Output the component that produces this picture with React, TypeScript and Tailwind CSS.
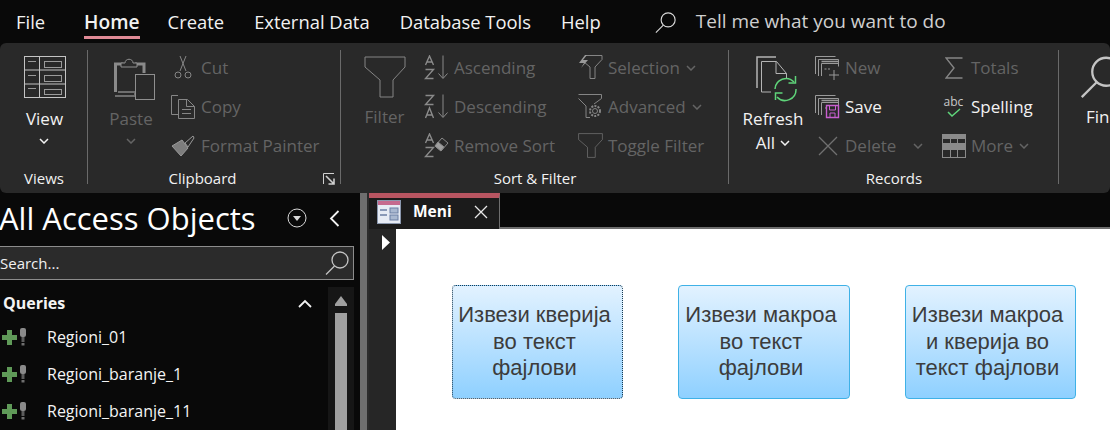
import React from 'react';

const UI_FONT = "font-['Open_Sans','Noto_Sans',sans-serif]";
const ON = 'text-[#f2f2f2]';
const OFF = 'text-[#646464]';

const Chevron = ({ className = '' }: { className?: string }) => (
  <svg width="10" height="6" viewBox="0 0 10 6" className={className} fill="none" stroke="currentColor" strokeWidth="1.5">
    <path d="M1 1l4 4 4-4" />
  </svg>
);

const ViewIcon = () => (
  <svg width="42" height="42" viewBox="0 0 42 42" fill="none" stroke="#c4c4c4">
    <rect x="0.5" y="0.5" width="41" height="41" strokeWidth="1" />
    <path d="M15.5 0v42M0 14h42M0 28h42" strokeWidth="1" />
    <path d="M4 5.5h8M4 19.5h8M4 32.5h8" stroke="#9a9a9a" />
    <rect x="20.5" y="5.5" width="17" height="6" stroke="#9a9a9a" />
    <rect x="20.5" y="19.5" width="17" height="6" stroke="#9a9a9a" />
    <rect x="20.5" y="33.5" width="17" height="5" stroke="#9a9a9a" />
  </svg>
);

const PasteIcon = () => (
  <svg width="42" height="46" viewBox="0 0 42 46" fill="none">
    <path d="M1.5 36V8h8M21 8h9v9" stroke="#8a8a8a" strokeWidth="3" />
    <path d="M1 40h20v-4H4" stroke="#6e6e6e" strokeWidth="2" />
    <path d="M7 11V7h4c0-5 8-5 8 0h4v4z" stroke="#8f8f8f" strokeWidth="1" fill="#2a2a2a" />
    <rect x="21.5" y="18.5" width="19" height="25" stroke="#8f8f8f" />
  </svg>
);

const CutIcon = () => (
  <svg width="20" height="24" viewBox="0 0 20 24" fill="none" stroke="#868686" strokeWidth="1">
    <path d="M7 0l6 15M13 0L7 15" />
    <circle cx="5" cy="19" r="3" />
    <circle cx="15" cy="19" r="3" />
  </svg>
);

const CopyIcon = () => (
  <svg width="24" height="24" viewBox="0 0 24 24" fill="none" stroke="#868686">
    <path d="M7 .5H.5v19H7" />
    <path d="M7.5 4.5h9l7 7v12h-16z" fill="#2a2a2a" />
    <path d="M15.5 4.5v7h8M11 14.5h9M11 18.5h9" />
  </svg>
);

const PainterIcon = () => (
  <svg width="24" height="22" viewBox="0 0 24 22" fill="none">
    <path d="M1 11l10-6 6 8-7 8z" fill="#7d7d7d" stroke="#9a9a9a" />
    <path d="M14 8l8-7 1 2-6 9z" fill="#2a2a2a" stroke="#9a9a9a" />
  </svg>
);

const LauncherIcon = () => (
  <svg width="12" height="12" viewBox="0 0 12 12" fill="none" stroke="#d0d0d0">
    <path d="M.5 11V.5H11" />
    <path d="M3 3l8 8M11 5.5V11H5.5" strokeWidth="1.6" />
  </svg>
);

const FunnelIcon = ({ w, h, sw = 1 }: { w: number; h: number; sw?: number }) => (
  <svg width={w} height={h} viewBox="0 0 42 42" fill="none" stroke="#858585" strokeWidth={sw}>
    <path d="M1 1h40v10L29 24v17H16V24L1 11z" />
  </svg>
);

const SortIcon = ({ top, bottom }: { top: string; bottom: string }) => (
  <svg width="25" height="25" viewBox="0 0 25 25" fill="none" stroke="#8a8a8a" strokeWidth="1">
    <path d={top === 'A' ? 'M1.5 10L5.5 1l4 9M3 7h5' : 'M1.5 1.5h8L1.5 10.5h8'} strokeWidth="1.4" />
    <path d={bottom === 'Z' ? 'M1.5 14.5h8L1.5 23.5h8' : 'M1.5 24L5.5 14l4 10M3 21h5'} strokeWidth="1.4" />
    <path d="M19 .5V23M14.5 18.5L19 23.5l4.500-5" />
  </svg>
);

const RemoveSortIcon = () => (
  <svg width="25" height="25" viewBox="0 0 25 25" fill="none" stroke="#8a8a8a">
    <path d="M1.500 10L5.500 1l4 9M3 7h5M1.500 14.500h8L1.500 23.500h8" strokeWidth="1.4" />
    <path d="M18 5l6 5-7 8-6-5z" fill="#2a2a2a" />
    <path d="M14 9l6 5-3 4-6-5z" fill="#a0a0a0" />
  </svg>
);

const SelectionIcon = () => (
  <svg width="25" height="25" viewBox="0 0 25 25" fill="none" stroke="#858585">
    <path d="M8 .5h16v4L17 12v11.500h-5V12L6 7" />
    <path d="M7 0L1 8h5l-3 5 7-8H5l4-5z" fill="#9a9a9a" stroke="none" />
  </svg>
);

const AdvancedIcon = () => (
  <svg width="25" height="25" viewBox="0 0 25 25" fill="none" stroke="#858585">
    <path d="M.5.500h23v4L16 10M.5 4.500L8 12v11.500h4" />
    <circle cx="17" cy="17" r="5" strokeWidth="2" strokeDasharray="2 1.200" />
    <circle cx="17" cy="17" r="2.500" />
  </svg>
);

const RefreshIcon = () => (
  <svg width="42" height="46" viewBox="0 0 42 46" fill="none">
    <path d="M1 32V1h19" stroke="#b4b4b4" strokeWidth="1.500" />
    <path d="M5.500 36V5.500h15l10 12v5M15 36H5.500" stroke="#b4b4b4" />
    <path d="M20 5.500v12h10.500" stroke="#b4b4b4" />
    <path d="M19 33a11 11 0 0 1 19-7M40 33a11 11 0 0 1-19 8" stroke="#5fd47a" strokeWidth="1.500" />
    <path d="M39.500 20v7h-7M19.500 44v-7h7" stroke="#5fd47a" strokeWidth="1.500" />
  </svg>
);

const WindowStack = ({ badge }: { badge: 'new' | 'save' }) => (
  <svg width="25" height="24" viewBox="0 0 25 24" fill="none" stroke="#9a9a9a">
    <path d="M.5 18V.5h20" />
    <path d="M3.500 20V3.500h20v5" />
    <path d="M6.500 20V7.500h17v3" />
    <path d="M6.500 5.500h17" strokeWidth="1.500" />
    {badge === 'new' ? (
      <>
        <path d="M9.500 13h2M13 13h2" />
        <path d="M19 14v10M14 19h10" />
      </>
    ) : (
      <>
        <path d="M10 13h1" />
        <path d="M11.500 10.500h12v12h-12z" stroke="#c95fd0" strokeWidth="1.400" fill="#2a2a2a" />
        <path d="M14.500 11v4h6v-4M15 22v-4h5v4" stroke="#c95fd0" />
      </>
    )}
  </svg>
);

const DeleteIcon = () => (
  <svg width="20" height="20" viewBox="0 0 20 20" stroke="#707070" strokeWidth="1.300">
    <path d="M1 1l18 18M19 1L1 19" />
  </svg>
);

const SumIcon = () => (
  <svg width="18" height="22" viewBox="0 0 18 22" fill="none" stroke="#858585" strokeWidth="1.400">
    <path d="M17.500 1H1l8 10-8 10h16.500" />
  </svg>
);

const SpellIcon = () => (
  <div className="flex flex-col items-center w-[20px]">
    <span className={`${UI_FONT} text-[12px] leading-[12px] text-[#c8c8c8]`}>abc</span>
    <svg width="14" height="9" viewBox="0 0 14 9" fill="none" stroke="#5fd47a" strokeWidth="1.500">
      <path d="M1 4l4 4 8-7" />
    </svg>
  </div>
);

const MoreIcon = () => (
  <svg width="24" height="24" viewBox="0 0 24 24" fill="none" stroke="#8a8a8a">
    <rect x="0.500" y="0.500" width="23" height="23" />
    <rect x="1" y="1" width="22" height="4" fill="#8a8a8a" stroke="none" />
    <rect x="1" y="10" width="22" height="5" fill="#8a8a8a" stroke="none" />
    <path d="M0 9.500h24M0 15.500h24M8.500 5v5M15.500 5v5M8.500 15v9M15.500 15v9" />
  </svg>
);

const SearchGlass = ({ size, color }: { size: number; color: string }) => (
  <svg width={size} height={size} viewBox="0 0 24 24" fill="none" stroke={color} strokeWidth="1.300">
    <circle cx="15" cy="9" r="8" />
    <path d="M9.500 15L1 23.500" />
  </svg>
);

const SmallButton = ({
  icon,
  label,
  on,
  chevron,
  iconBox = 'w-[25px]',
  gap = 'gap-[5px]',
}: {
  icon: React.ReactNode;
  label: string;
  on?: boolean;
  chevron?: boolean;
  iconBox?: string;
  gap?: string;
}) => (
  <div className={`flex items-center h-[39px] ${gap}`}>
    <div className={`flex justify-center items-center shrink-0 ${iconBox}`}>{icon}</div>
    <span className={`text-[17px] whitespace-nowrap ${on ? ON : OFF}`}>{label}</span>
    {chevron && <Chevron className={`ml-[1px] ${on ? ON : OFF}`} />}
  </div>
);

const Group = ({
  label,
  width,
  children,
  launcher,
  last,
  labelClass = '',
}: {
  label: string;
  width: string;
  children: React.ReactNode;
  launcher?: boolean;
  last?: boolean;
  labelClass?: string;
}) => (
  <div className={`relative flex flex-col shrink-0 h-full ${width}`}>
    <div className="flex h-[125px] pt-[5px]">{children}</div>
    <div className={`text-center text-[15px] leading-[20px] ${ON} ${labelClass}`}>{label}</div>
    {launcher && (
      <div className="absolute right-[6px] bottom-[8px]">
        <LauncherIcon />
      </div>
    )}
    {!last && <div className="absolute right-0 top-[7px] bottom-[9px] w-px bg-[#6a6a6a]" />}
  </div>
);

const TabLabel = ({ children, className = '' }: { children: React.ReactNode; className?: string }) => (
  <span className={`text-[18.4px] text-[#f2f2f2] whitespace-nowrap ${className}`}>{children}</span>
);

const QueryIcon = () => (
  <svg width="26" height="18" viewBox="0 0 26 18">
    <path d="M6 2h5v5h5v5h-5v5H6v-5H1V7h5z" fill="#5f9a58" />
    <rect x="19" y="0" width="6" height="9" rx="2" fill="#8a8a8a" />
    <rect x="20.500" y="9" width="3" height="5" fill="#5c5c5c" />
    <rect x="20.500" y="15" width="3" height="2.500" fill="#6e6e6e" />
  </svg>
);

const NavRow = ({ label }: { label: string }) => (
  <div className="flex items-center h-[37px]">
    <div className="w-[47px] pl-[1px] shrink-0">
      <QueryIcon />
    </div>
    <span className="text-[16px] text-[#f4f4f4]">{label}</span>
  </div>
);

const FormButton = ({ lines, focused, width = 'w-[171px]' }: { lines: string[]; focused?: boolean; width?: string }) => (
  <button
    className={`${width} h-[114px] rounded-[4px] bg-gradient-to-b from-[#e2f2ff] to-[#8ed0ff] flex flex-col items-center justify-center pr-[6px] text-[22px] leading-[26.500px] text-[#3c3c3c] font-['Liberation_Sans',sans-serif] border ${
      focused ? 'border-dotted border-[#1b3a4f]' : 'border-[#3fb1e6]'
    }`}
  >
    {lines.map((l) => (
      <span key={l} className="whitespace-nowrap">
        {l}
      </span>
    ))}
  </button>
);

export default function App() {
  return (
    <div className={`w-[1110px] h-[430px] overflow-hidden bg-[#090909] ${UI_FONT} flex flex-col`}>
      {/* Tabs */}
      <div className="h-[43px] flex items-center shrink-0 pl-[16px] pt-[1px]">
        <TabLabel>File</TabLabel>
        <div className="relative ml-[39px] flex flex-col items-center">
          <TabLabel className="font-semibold text-[19.2px]">Home</TabLabel>
          <div className="absolute -bottom-[3px] left-0 right-0 h-[3px] bg-[#e08a96]" />
        </div>
        <TabLabel className="ml-[28px]">Create</TabLabel>
        <TabLabel className="ml-[30px]">External Data</TabLabel>
        <TabLabel className="ml-[30px]">Database Tools</TabLabel>
        <TabLabel className="ml-[30px]">Help</TabLabel>
        <div className="ml-[54px]">
          <SearchGlass size={21} color="#d8d8d8" />
        </div>
        <span className="ml-[20px] -mt-[1px] text-[19px] text-[#cfcfcf] whitespace-nowrap">Tell me what you want to do</span>
      </div>

      {/* Ribbon */}
      <div className="h-[150px] shrink-0 bg-[#292929] rounded-[6px] flex overflow-hidden">
        <Group label="Views" width="w-[88px]">
          <div className="flex flex-col items-center w-[87px]">
            <div className="mt-[8px] ml-[3px]">
              <ViewIcon />
            </div>
            <span className={`text-[17px] leading-[22px] mt-[10px] ml-[2px] ${ON}`}>View</span>
            <Chevron className={`mt-[8px] ${ON}`} />
          </div>
        </Group>

        <Group label="Clipboard" width="w-[253px]" launcher labelClass="pr-[24px]">
          <div className="flex w-[82px] flex-col items-center shrink-0">
            <div className="mt-[8px] ml-[12px]">
              <PasteIcon />
            </div>
            <span className={`text-[17px] leading-[22px] mt-[6px] ml-[4px] ${OFF}`}>Paste</span>
            <Chevron className={`mt-[8px] ml-[4px] ${OFF}`} />
          </div>
          <div className="flex flex-col">
            <SmallButton icon={<CutIcon />} label="Cut" iconBox="w-[26px]" />
            <SmallButton icon={<CopyIcon />} label="Copy" iconBox="w-[26px]" />
            <SmallButton icon={<PainterIcon />} label="Format Painter" iconBox="w-[26px]" />
          </div>
        </Group>

        <Group label="Sort & Filter" width="w-[388px]">
          <div className="flex w-[83px] flex-col items-center shrink-0">
            <div className="mt-[8px] ml-[4px]">
              <FunnelIcon w={42} h={42} />
            </div>
            <span className={`text-[17px] leading-[22px] mt-[8px] ml-[4px] ${OFF}`}>Filter</span>
          </div>
          <div className="flex flex-col w-[154px] shrink-0">
            <SmallButton icon={<SortIcon top="A" bottom="Z" />} label="Ascending" />
            <SmallButton icon={<SortIcon top="Z" bottom="A" />} label="Descending" />
            <SmallButton icon={<RemoveSortIcon />} label="Remove Sort" />
          </div>
          <div className="flex flex-col">
            <SmallButton icon={<SelectionIcon />} label="Selection" chevron />
            <SmallButton icon={<AdvancedIcon />} label="Advanced" chevron />
            <SmallButton icon={<FunnelIcon w={25} h={25} />} label="Toggle Filter" />
          </div>
        </Group>

        <Group label="Records" width="w-[330px]">
          <div className="flex w-[86px] flex-col items-center shrink-0">
            <div className="mt-[8px] ml-[9px]">
              <RefreshIcon />
            </div>
            <span className={`text-[17px] leading-[22px] mt-[6px] ml-[2px] ${ON}`}>Refresh</span>
            <div className={`flex items-center gap-[5px] mt-[2px] ml-[2px] ${ON}`}>
              <span className="text-[17px] leading-[22px]">All</span>
              <Chevron />
            </div>
          </div>
          <div className="flex flex-col w-[126px] shrink-0">
            <SmallButton icon={<WindowStack badge="new" />} label="New" />
            <SmallButton icon={<WindowStack badge="save" />} label="Save" on />
            <div className="flex items-center">
              <SmallButton icon={<DeleteIcon />} label="Delete" />
              <Chevron className={`ml-[17px] ${OFF}`} />
            </div>
          </div>
          <div className="flex flex-col">
            <SmallButton icon={<SumIcon />} label="Totals" />
            <SmallButton icon={<SpellIcon />} label="Spelling" on />
            <SmallButton icon={<MoreIcon />} label="More" chevron />
          </div>
        </Group>

        <Group label="" width="w-[60px]" last>
          <div className="flex flex-col pl-[21px]">
            <div className="mt-[8px]">
              <SearchGlass size={42} color="#c4c4c4" />
            </div>
            <span className={`text-[17px] leading-[22px] mt-[8px] ml-[6px] whitespace-nowrap ${ON}`}>Find</span>
          </div>
        </Group>
      </div>

      {/* Body */}
      <div className="flex flex-1 min-h-0">
        {/* Navigation pane */}
        <div className="w-[360px] shrink-0 flex flex-col overflow-hidden">
          <div className="h-[53px] flex items-center">
            <span className="text-[31px] leading-[36px] text-white -ml-[1px] -mt-[3px] whitespace-nowrap">All Access Objects</span>
            <svg width="20" height="20" viewBox="0 0 20 20" fill="none" className="ml-[31px] -mt-[3px]" stroke="#d8d8d8">
              <circle cx="10" cy="10" r="9" />
              <path d="M6 8h8l-4 5z" fill="#d8d8d8" stroke="none" />
            </svg>
            <svg width="11" height="17" viewBox="0 0 11 17" fill="none" className="ml-[22px] -mt-[3px]" stroke="#f2f2f2" strokeWidth="1.800">
              <path d="M9.500 1L2 8.500 9.500 16" />
            </svg>
          </div>
          <div className="h-[34px] w-[354px] border-y border-r border-[#8c8c8c] bg-[#2b2b2b] flex items-center justify-between pr-[4px] shrink-0">
            <span className="text-[15px] text-[#f0f0f0]">Search...</span>
            <SearchGlass size={24} color="#c4c4c4" />
          </div>
          <div className="flex flex-1 min-h-0 pt-[7px]">
            <div className="w-[328px] shrink-0">
              <div className="flex items-center justify-between h-[30px] pl-[3px] pr-[16px] pt-[2px]">
                <span className="text-[16px] font-bold text-[#f4f4f4]">Queries</span>
                <svg width="14" height="9" viewBox="0 0 14 9" fill="none" stroke="#f2f2f2" strokeWidth="1.800">
                  <path d="M1 8l6-6 6 6" />
                </svg>
              </div>
              <div className="mt-[1px]">
                <NavRow label="Regioni_01" />
                <NavRow label="Regioni_baranje_1" />
                <NavRow label="Regioni_baranje_11" />
              </div>
            </div>
            <div className="w-[26px] bg-[#161616] flex flex-col items-center pt-[9px]">
              <svg width="14" height="10" viewBox="0 0 14 10">
                <path d="M7 0l6 8v2H1V8z" fill="#a0a0a0" />
              </svg>
              <div className="w-[12px] flex-1 mt-[7px] bg-[#a0a0a0]" />
            </div>
          </div>
        </div>

        {/* Splitter */}
        <div className="w-[7px] shrink-0 bg-[#6e6e6e]" />
        <div className="w-[2px] shrink-0 bg-[#2b2b2b]" />

        {/* Document */}
        <div className="flex-1 flex flex-col min-w-0">
          <div className="h-[36px] flex shrink-0">
            <div className="w-[131px] h-full bg-[#1b1b1b] border-t-[5px] border-[#b85561] border-r border-r-[#6e6e6e] flex items-center pb-[3px]">
              <svg width="24" height="24" viewBox="0 0 24 24" className="ml-[8px]">
                <rect x="0.500" y="0.500" width="23" height="23" fill="#e6ebf4" stroke="#8a97ad" />
                <rect x="1" y="1" width="22" height="4" fill="#c56a8e" />
                <path d="M3 10h7M3 15h7" stroke="#6b7fa3" strokeWidth="1.500" />
                <rect x="13" y="8" width="8" height="5" fill="#a9b8d0" stroke="#6b7fa3" />
                <rect x="13" y="15" width="8" height="5" fill="#a9b8d0" stroke="#6b7fa3" />
              </svg>
              <span className="ml-[12px] text-[15.5px] font-bold text-white">Meni</span>
              <svg width="14" height="14" viewBox="0 0 14 14" className="ml-[22px]" stroke="#e8e8e8" strokeWidth="1.300">
                <path d="M1 1l12 12M13 1L1 13" />
              </svg>
            </div>
            <div className="flex-1 bg-[#090909] border-b-[2px] border-[#6e6e6e]" />
          </div>
          <div className="flex flex-1 min-h-0">
            <div className="w-[27px] shrink-0 bg-[#262626] flex justify-start pt-[6px] pl-[13px]">
              <svg width="8" height="15" viewBox="0 0 8 15">
                <path d="M0 0l8 7.500L0 15z" fill="#ffffff" />
              </svg>
            </div>
            <div className="flex-1 bg-white flex items-start gap-[55px] pl-[56px] pt-[56px]">
              <FormButton focused lines={['Извези кверија', 'во текст', 'фајлови']} />
              <FormButton width="w-[172px]" lines={['Извези макроа', 'во текст', 'фајлови']} />
              <FormButton lines={['Извези макроа', 'и кверија во', 'текст фајлови']} />
            </div>
          </div>
        </div>
      </div>
    </div>
  );
}
